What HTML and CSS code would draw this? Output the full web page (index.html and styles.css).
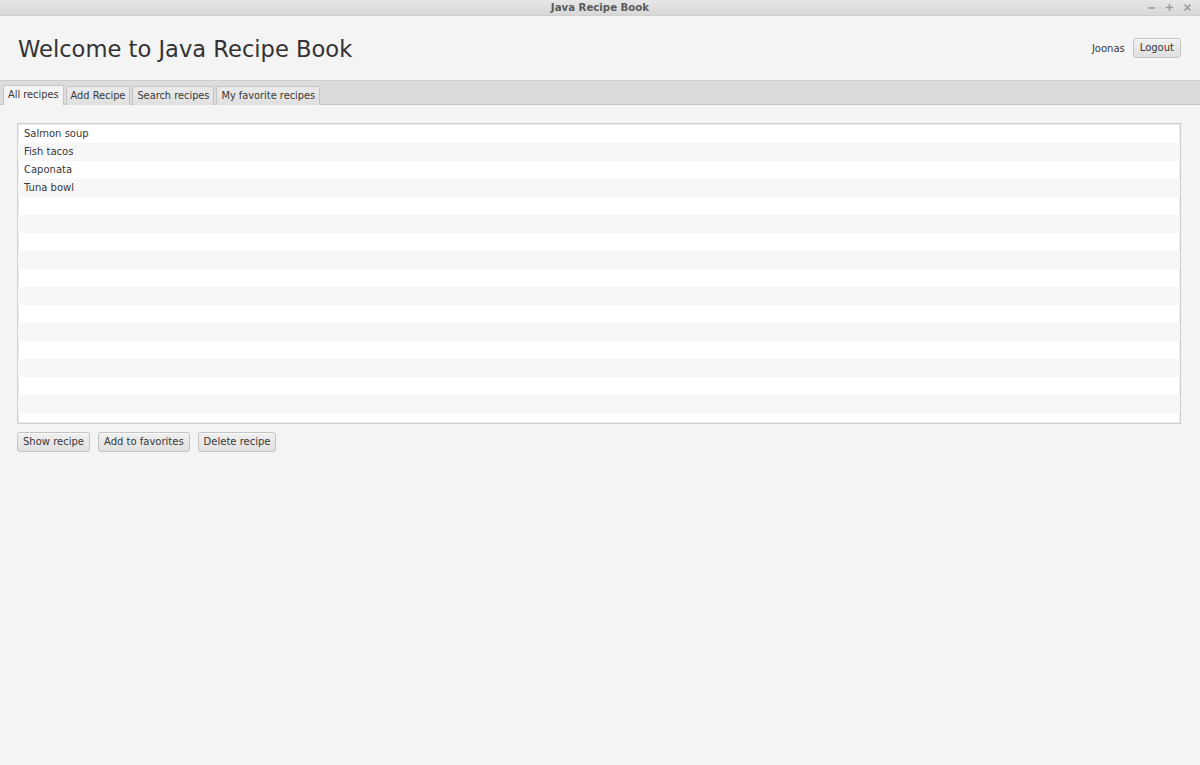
FILE: index.html
```html
<!DOCTYPE html>
<html>
<head>
<meta charset="utf-8">
<link rel="stylesheet" href="styles.css">
</head>
<body>
<div class="window">
  <div class="titlebar">
    <span class="title">Java Recipe Book</span>
    <div class="controls">
      <svg width="9" height="9" viewBox="0 0 9 9"><path d="M1 5h7" stroke="#9a9a9a" stroke-width="1.6"/></svg>
      <svg width="9" height="9" viewBox="0 0 9 9"><path d="M1 4.5h7M4.5 1v7" stroke="#9a9a9a" stroke-width="1.6"/></svg>
      <svg width="9" height="9" viewBox="0 0 9 9"><path d="M1.5 1.5l6 6M7.5 1.5l-6 6" stroke="#9a9a9a" stroke-width="1.6"/></svg>
    </div>
  </div>
  <header class="header">
    <h1 class="heading">Welcome to Java Recipe Book</h1>
    <div class="user">
      <span class="username">Joonas</span>
      <button class="btn">Logout</button>
    </div>
  </header>
  <nav class="tabbar">
    <div class="tab selected">All recipes</div>
    <div class="tab">Add Recipe</div>
    <div class="tab">Search recipes</div>
    <div class="tab">My favorite recipes</div>
  </nav>
  <main class="content">
    <div class="list">
      <div class="row">Salmon soup</div>
      <div class="row">Fish tacos</div>
      <div class="row">Caponata</div>
      <div class="row">Tuna bowl</div>
      <div class="row"></div><div class="row"></div><div class="row"></div><div class="row"></div>
      <div class="row"></div><div class="row"></div><div class="row"></div><div class="row"></div>
      <div class="row"></div><div class="row"></div><div class="row"></div><div class="row"></div>
    </div>
    <div class="actions">
      <button class="btn">Show recipe</button>
      <button class="btn">Add to favorites</button>
      <button class="btn">Delete recipe</button>
    </div>
  </main>
</div>
</body>
</html>
```
FILE: styles.css
```css
* { box-sizing: border-box; }
html, body { margin: 0; padding: 0; height: 100%; }
body {
  font-family: "DejaVu Sans", sans-serif;
  background: #f4f4f4;
  color: #383838;
}
.window { display: flex; flex-direction: column; height: 765px; }
.titlebar {
  height: 16px;
  background: linear-gradient(#e6e6e6, #d8d8d8);
  border-bottom: 1px solid #cfcfcf;
  display: flex;
  align-items: center;
  justify-content: center;
  position: relative;
}
.title { font-size: 10.2px; font-weight: bold; color: #5a5a5a; line-height: 15px; }
.controls {
  position: absolute;
  right: 8px;
  top: 3px;
  display: flex;
  gap: 9px;
}
.controls svg { display: block; }
.header {
  height: 64px;
  display: flex;
  align-items: center;
  justify-content: space-between;
  padding: 0 19px 0 18px;
}
.heading {
  margin: 0;
  font-size: 22.6px;
  font-weight: normal;
  color: #333;
  padding-top: 1px;
}
.user { display: flex; align-items: center; gap: 8px; }
.username { font-size: 10px; color: #383838; }
.btn {
  font-family: "DejaVu Sans", sans-serif;
  font-size: 10px;
  color: #383838;
  height: 20px;
  padding: 0 5px;
  border: 1px solid #c4c4c4;
  border-radius: 3px;
  background: linear-gradient(#f0f0f0, #e0e0e0);
  box-shadow: inset 0 1px 0 #fafafa;
  line-height: 18px;
}
.user .btn { padding: 0 6px; }
.tabbar {
  height: 25px;
  background: #dcdcdc;
  border-top: 1px solid #cdcdcd;
  border-bottom: 1px solid #c8c8c8;
  display: flex;
  align-items: flex-end;
  padding-left: 3px;
  gap: 2px;
}
.tab {
  height: 19px;
  margin-bottom: -1px;
  padding: 0 4px;
  font-size: 9.8px;
  line-height: 18px;
  color: #383838;
  background: linear-gradient(#eaeaea, #e0e0e0);
  border: 1px solid #c4c4c4;
  border-bottom: none;
  border-radius: 2px 2px 0 0;
}
.tab.selected {
  background: #f4f4f4;
  height: 20px;
}
.content { padding: 18px 19px 18px 17px; display: flex; flex-direction: column; gap: 8px; }
.list {
  height: 301px;
  background: #fff;
  border: 1px solid #cfcfcf;
  box-shadow: inset 0 0 0 1px #ececec;
  padding-top: 1px;
  overflow: hidden;
}
.row {
  height: 18px;
  padding-left: 6px;
  font-size: 10px;
  line-height: 18px;
  color: #383838;
}
.row:nth-child(even) { background: #f7f7f7; }
.actions { display: flex; gap: 8px; }
```
